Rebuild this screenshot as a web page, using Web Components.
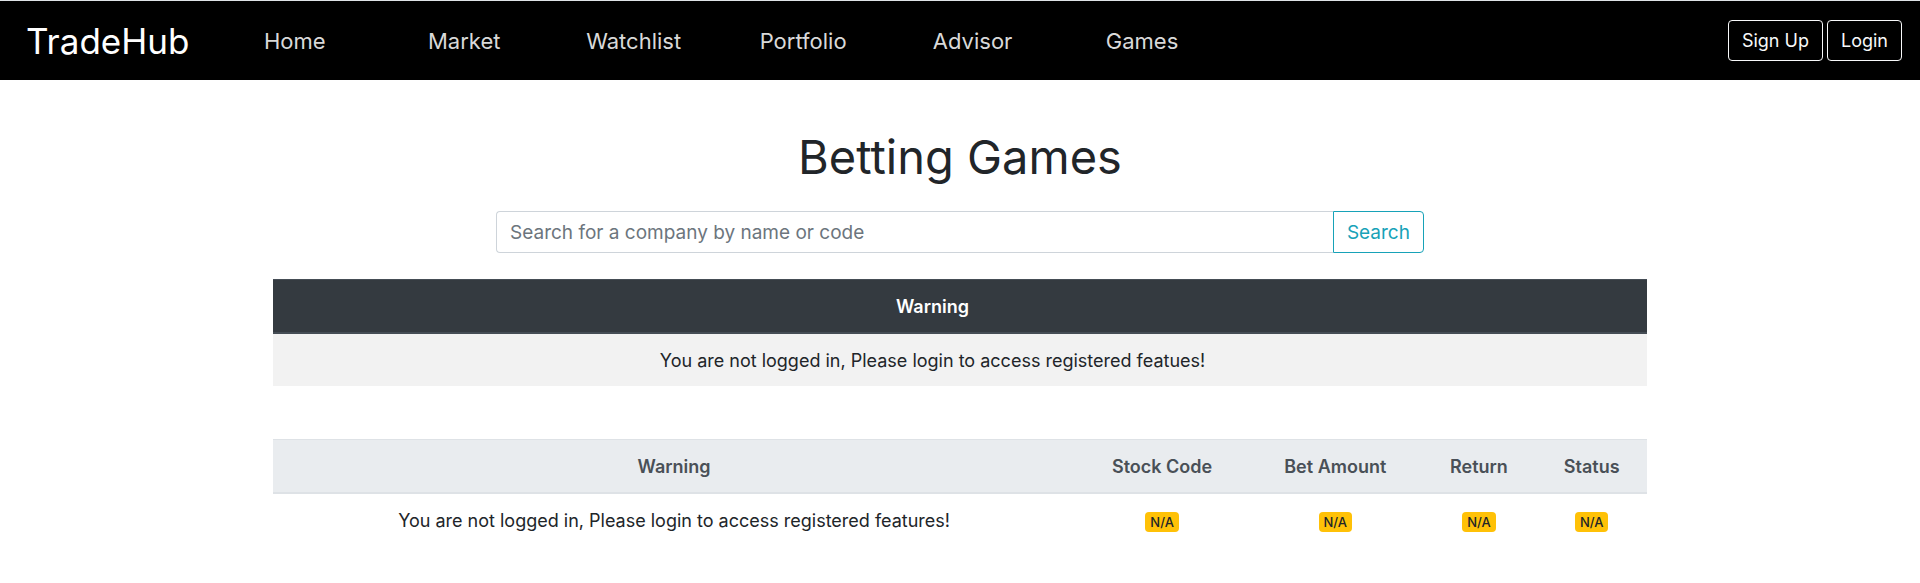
<!DOCTYPE html>
<html lang="en">
<head>
<meta charset="utf-8">
<title>TradeHub</title>
<style>
  body { margin: 0; background: #fff; color: #212529; font: 18px/27px Inter, sans-serif; }
</style>
</head>
<body>
<trade-page></trade-page>

<template id="page">
  <style>
    :host { display: block; }
    main { width: 71.6%; margin: 0 auto; display: flex; flex-direction: column; align-items: center; }
    h1 { margin: 49px 0 26px; font-size: 47px; line-height: 56px; font-weight: 400; }
    company-search { width: 67.5%; }
    data-table { width: 100%; margin-top: 26px; }
    data-table + data-table { margin-top: 53px; }
  </style>
  <top-nav>
    <nav-item href="#home">Home</nav-item>
    <nav-item href="#market">Market</nav-item>
    <nav-item href="#watchlist">Watchlist</nav-item>
    <nav-item href="#portfolio">Portfolio</nav-item>
    <nav-item href="#advisor">Advisor</nav-item>
    <nav-item href="#games">Games</nav-item>
    <outline-button slot="actions">Sign Up</outline-button>
    <outline-button slot="actions">Login</outline-button>
  </top-nav>
  <main>
    <h1>Betting Games</h1>
    <company-search></company-search>
    <data-table theme="dark" columns="Warning|" widths="96%|4%"
      row="You are not logged in, Please login to access registered featues!|"></data-table>
    <data-table theme="light" columns="Warning|Stock Code|Bet Amount|Return|Status"
      widths="58.4%|12.6%|12.6%|8.3%|8.1%"
      row="You are not logged in, Please login to access registered features!|N/A|N/A|N/A|N/A"></data-table>
  </main>
</template>

<template id="nav">
  <style>
    :host { display: block; border-top: 1px solid #dee2e6; background: #000; }
    nav { display: flex; align-items: center; height: 79px; padding: 0 18px 0 26px; }
    .brand { width: 184px; color: #fff; font-size: 35px; line-height: 48px; text-decoration: none; }
    .links { display: flex; width: 54.2%; }
    .actions { display: flex; gap: 4px; margin-left: auto; }
  </style>
  <nav aria-label="Main">
    <a class="brand" href="#">TradeHub</a>
    <div class="links"><slot></slot></div>
    <div class="actions"><slot name="actions"></slot></div>
  </nav>
</template>

<template id="item">
  <style>
    :host { display: block; flex: 1; text-align: center; font-size: 22px; line-height: 32px; }
    a { color: #d9d9d9; text-decoration: none; }
  </style>
  <a><slot></slot></a>
</template>

<template id="button">
  <style>
    :host { display: block; }
    button { height: 41px; padding: 0 13px; border: 1px solid #f8f9fa; border-radius: 4px;
      background: transparent; color: #f8f9fa; font: inherit; white-space: nowrap; }
  </style>
  <button type="button"><slot></slot></button>
</template>

<template id="search">
  <style>
    :host { display: block; }
    form { display: flex; }
    input, button { box-sizing: border-box; height: 42px; padding: 0 13px; background: #fff; font: inherit; font-size: 19px; }
    input { flex: 1; min-width: 0; border: 1px solid #ced4da; border-right: 0; border-radius: 4px 0 0 4px; color: #495057; }
    input::placeholder { color: #6c757d; opacity: 1; }
    button { border: 1px solid #17a2b8; border-radius: 0 4px 4px 0; color: #17a2b8; }
  </style>
  <form>
    <input type="text" aria-label="Company name or code" placeholder="Search for a company by name or code">
    <button type="button">Search</button>
  </form>
</template>

<template id="table">
  <style>
    :host { display: block; }
    table { width: 100%; border-collapse: separate; border-spacing: 0; table-layout: fixed; text-align: center; }
    th, td { box-sizing: border-box; padding: 12px; }
    th { height: 55px; padding: 0; border: solid #dee2e6; border-width: 1px 0 2px; background: #e9ecef; color: #495057; font-weight: 600; }
    td { height: 52px; }
    :host([theme="dark"]) th { background: #343a40; border-color: #454d55; color: #fff; }
    :host([theme="dark"]) td { background: #f2f2f2; }
  </style>
  <table><colgroup></colgroup><thead><tr></tr></thead><tbody><tr></tr></tbody></table>
</template>

<template id="badge">
  <style>
    :host { display: inline-block; padding: 0 5px; border-radius: 4px; background: #ffc107; color: #212529;
      font-size: 13px; line-height: 20px; font-weight: 500; vertical-align: middle; }
  </style>
  <slot></slot>
</template>

<script>
  class Base extends HTMLElement {
    constructor() {
      super();
      const source = document.getElementById(this.constructor.template);
      this.attachShadow({ mode: 'open' }).append(document.importNode(source.content, true));
    }
  }
  class StatusBadge extends Base { static template = 'badge'; }
  class OutlineButton extends Base { static template = 'button'; }
  class CompanySearch extends Base { static template = 'search'; }
  class TopNav extends Base { static template = 'nav'; }
  class TradePage extends Base { static template = 'page'; }
  class NavItem extends Base {
    static template = 'item';
    connectedCallback() {
      this.shadowRoot.querySelector('a').href = this.getAttribute('href');
    }
  }
  class DataTable extends Base {
    static template = 'table';
    connectedCallback() {
      const list = name => this.getAttribute(name).split('|');
      const find = selector => this.shadowRoot.querySelector(selector);
      find('colgroup').replaceChildren(...list('widths').map(width => {
        const col = document.createElement('col');
        col.style.width = width;
        return col;
      }));
      find('thead tr').replaceChildren(...list('columns').map(text => {
        const cell = document.createElement('th');
        cell.scope = 'col';
        cell.textContent = text;
        return cell;
      }));
      find('tbody tr').replaceChildren(...list('row').map(text => {
        const cell = document.createElement('td');
        if (text === 'N/A') {
          const badge = document.createElement('status-badge');
          badge.textContent = text;
          cell.append(badge);
        } else {
          cell.textContent = text;
        }
        return cell;
      }));
    }
  }
  customElements.define('status-badge', StatusBadge);
  customElements.define('outline-button', OutlineButton);
  customElements.define('company-search', CompanySearch);
  customElements.define('nav-item', NavItem);
  customElements.define('top-nav', TopNav);
  customElements.define('data-table', DataTable);
  customElements.define('trade-page', TradePage);
</script>
</body>
</html>
